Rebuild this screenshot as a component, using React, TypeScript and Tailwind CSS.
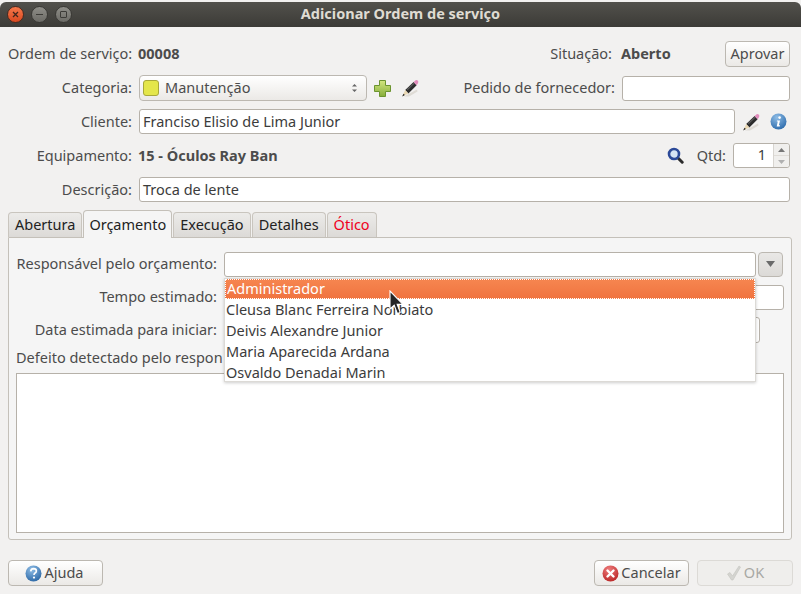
import React from "react";

function Pencil({ className = "" }: { className?: string }) {
  return (
    <svg width="18" height="18" viewBox="0 0 18 18" className={className}>
      <path d="M3 17.5 L16 10.5 L16.5 12.5 L8 17.5 Z" fill="#d4d0c6" opacity="0.65" />
      <path d="M4.2 11 L12.6 3 L15.6 6.2 L7.4 14.4 Z" fill="#2c2c2c" />
      <path d="M5.8 10.2 L13.2 3.4 L13.9 4.2 L6.6 11.2 Z" fill="#5c5c5c" />
      <path d="M12.6 3 L14.6 1.2 Q15.8 0.6 16.9 1.7 Q17.7 2.8 17.1 4 L15.6 6.2 Z" fill="#e28cbc" />
      <path d="M4.2 11 L7.4 14.4 L1.4 17.2 Z" fill="#e9d7b2" />
      <path d="M2.5 14.7 L3.9 16 L1.2 17.4 Z" fill="#222" />
    </svg>
  );
}

function Plus() {
  return (
    <svg width="17" height="17" viewBox="0 0 17 17">
      <defs>
        <linearGradient id="plusGrad" x1="0" y1="0" x2="0" y2="1">
          <stop offset="0" stopColor="#d3e680" />
          <stop offset="1" stopColor="#86ad3a" />
        </linearGradient>
      </defs>
      <path d="M5.5 0.5 H11.5 V5.5 H16.5 V11.5 H11.5 V16.5 H5.5 V11.5 H0.5 V5.5 H5.5 Z" fill="url(#plusGrad)" stroke="#6c9430" strokeWidth="1" />
    </svg>
  );
}

function Info() {
  return (
    <svg width="17" height="17" viewBox="0 0 17 17">
      <defs>
        <radialGradient id="infoGrad" cx="0.4" cy="0.25" r="0.9">
          <stop offset="0" stopColor="#8fbde6" />
          <stop offset="1" stopColor="#1e5fa3" />
        </radialGradient>
      </defs>
      <circle cx="8.5" cy="8.5" r="8" fill="url(#infoGrad)" />
      <circle cx="9.6" cy="4.6" r="1.3" fill="#fff" />
      <path d="M7 7.4 H10 L8.9 12.2 H10 L9.7 13.4 H6.7 L7.8 8.4 H6.8 Z" fill="#fff" />
    </svg>
  );
}

function Magnifier() {
  return (
    <svg width="17" height="17" viewBox="0 0 17 17">
      <path d="M10.5 10.5 L15.2 15.2" stroke="#2b2b2b" strokeWidth="3" strokeLinecap="round" />
      <circle cx="7" cy="7" r="5" fill="#d6e4f4" stroke="#2c4a98" strokeWidth="2.6" />
    </svg>
  );
}

function Help() {
  return (
    <svg width="17" height="17" viewBox="0 0 17 17">
      <defs>
        <radialGradient id="helpGrad" cx="0.4" cy="0.25" r="0.9">
          <stop offset="0" stopColor="#8fbde6" />
          <stop offset="1" stopColor="#1d5b9c" />
        </radialGradient>
      </defs>
      <circle cx="8.5" cy="8.5" r="8" fill="url(#helpGrad)" />
      <path d="M5.7 6.3 Q6 3.6 8.6 3.6 Q11.4 3.7 11.4 6 Q11.4 7.4 9.8 8.3 Q9 8.8 9 10.1" fill="none" stroke="#fff" strokeWidth="1.6" />
      <circle cx="9" cy="12.6" r="1.1" fill="#fff" />
    </svg>
  );
}

function CancelIcon() {
  return (
    <svg width="17" height="17" viewBox="0 0 17 17">
      <defs>
        <radialGradient id="cancelGrad" cx="0.4" cy="0.25" r="0.9">
          <stop offset="0" stopColor="#ee7b7b" />
          <stop offset="1" stopColor="#b31b1b" />
        </radialGradient>
      </defs>
      <circle cx="8.5" cy="8.5" r="8" fill="url(#cancelGrad)" />
      <path d="M5.5 5.5 L11.5 11.5 M11.5 5.5 L5.5 11.5" stroke="#fff" strokeWidth="2.4" strokeLinecap="round" />
    </svg>
  );
}

function CheckIcon() {
  return (
    <svg width="16" height="16" viewBox="0 0 16 16">
      <path d="M1.5 9 L4 7.5 L6.5 11 L13 1 L14.5 2 L7 15 L5.5 15 Z" fill="#d4d4d0" stroke="#c4c4c0" strokeWidth="0.6" />
    </svg>
  );
}

function Cursor() {
  return (
    <svg width="16" height="26" viewBox="0 0 16 26">
      <path d="M1 1 L1 19 L5.2 15.2 L8.4 23.6 L11.2 22.4 L8.2 14.4 L14 14.4 Z" fill="#262626" stroke="#fff" strokeWidth="1.1" />
    </svg>
  );
}

const input = "h-[25px] rounded-[3px] border border-[#b6b1a9] bg-white px-[3px] pb-[2px] flex items-center text-[#3c3c3c]";
const btn = "rounded-[4px] border border-[#bcb8b1] bg-gradient-to-b from-white to-[#ebe9e6] flex items-center justify-center text-[#4c4c4c]";
const value = "font-bold text-[#4c4c4c] -mt-[2px]";

function Label({ w = "w-[124px]", children }: { w?: string; children: React.ReactNode }) {
  return <div className={`${w} shrink-0 -mt-[2px] text-right text-[#4c4c4c] whitespace-nowrap`}>{children}</div>;
}

function Tab({ children, active, red }: { children: React.ReactNode; active?: boolean; red?: boolean }) {
  return active ? (
    <div className="relative z-10 h-[28px] -mb-px rounded-t-[4px] border border-b-0 border-[#c4c0b9] bg-[#f5f5f5] px-[5px] flex items-center text-[#222] whitespace-nowrap">
      <span className="-mt-[2px]">{children}</span>
    </div>
  ) : (
    <div className={`h-[25px] self-end rounded-t-[4px] border border-b-0 border-[#c9c5be] bg-gradient-to-b from-[#ecebe9] to-[#dcdad7] px-[6px] pb-[2px] flex items-center whitespace-nowrap ${red ? "text-[#f0001c]" : "text-[#222]"}`}>
      {children}
    </div>
  );
}

export default function App() {
  return (
    <div
      className="relative w-[801px] h-[594px] overflow-hidden bg-[#f2f1f0] text-[14.5px] leading-[20px] flex flex-col"
      style={{ fontFamily: '"Noto Sans", sans-serif' }}
    >
      {/* title bar */}
      <div className="relative h-[25px] mt-[2px] shrink-0 rounded-t-[6px] bg-gradient-to-b from-[#52514c] to-[#3c3b37] flex items-center pl-[7px] pr-[6px]">
        <div className="flex gap-[7px] items-center">
          <div className="w-[17px] h-[17px] rounded-full bg-gradient-to-b from-[#f5784a] to-[#d9481f] border border-[#4a2a1f] flex items-center justify-center">
            <svg width="7" height="7" viewBox="0 0 7 7"><path d="M1 1 L6 6 M6 1 L1 6" stroke="#41261c" strokeWidth="1.3" /></svg>
          </div>
          <div className="w-[17px] h-[17px] rounded-full bg-gradient-to-b from-[#8f8e88] to-[#6c6b66] border border-[#3a3935] flex items-center justify-center">
            <div className="w-[7px] h-[1.5px] bg-[#3c3b37]" />
          </div>
          <div className="w-[17px] h-[17px] rounded-full bg-gradient-to-b from-[#8f8e88] to-[#6c6b66] border border-[#3a3935] flex items-center justify-center">
            <div className="w-[7px] h-[7px] rounded-[1px] border border-[#3c3b37]" />
          </div>
        </div>
        <div className="flex-1 text-center font-bold text-[#dfdbd2] pr-[66px] -mt-[4px]">Adicionar Ordem de serviço</div>
      </div>

      {/* form */}
      <div className="pl-[8px] flex flex-col">
        <div className="w-[782px] h-[26px] mt-[14px] flex items-center">
          <Label>Ordem de serviço:</Label>
          <div className={`ml-[6px] ${value}`}>00008</div>
          <div className="ml-auto text-[#4c4c4c] -mt-[2px]">Situação:</div>
          <div className={`ml-[9px] w-[104px] ${value}`}>Aberto</div>
          <div className={`${btn} w-[65px] h-[26px] pb-[2px]`}>Aprovar</div>
        </div>

        <div className="w-[782px] h-[26px] mt-[8px] flex items-center">
          <Label>Categoria:</Label>
          <div className={`${btn} ml-[7px] w-[228px] h-[26px] justify-start! px-[3px] gap-[6px]`}>
            <div className="w-[16px] h-[16px] rounded-[3px] border border-[#a8a83a] bg-[#e4e64a]" />
            <span className="-mt-[2px]">Manutenção</span>
            <svg className="ml-auto mr-[5px]" width="7" height="14" viewBox="0 0 7 14">
              <path d="M3.5 3 L6 5.5 H1 Z M3.5 11 L6 8.5 H1 Z" fill="#666" />
            </svg>
          </div>
          <div className="ml-[7px] w-[17px]"><Plus /></div>
          <div className="ml-[10px] w-[18px]"><Pencil /></div>
          <div className="ml-auto"><Label w="w-[160px]">Pedido de fornecedor:</Label></div>
          <div className={`${input} ml-[7px] w-[168px]`} />
        </div>

        <div className="h-[25px] mt-[8px] flex items-center">
          <Label>Cliente:</Label>
          <div className={`${input} ml-[7px] w-[596px]`}>Franciso Elisio de Lima Junior</div>
          <div className="ml-[7px]"><Pencil /></div>
          <div className="ml-[10px]"><Info /></div>
        </div>

        <div className="w-[782px] h-[25px] mt-[9px] flex items-center">
          <Label>Equipamento:</Label>
          <div className={`ml-[6px] ${value}`}>15 - Óculos Ray Ban</div>
          <div className="ml-auto"><Magnifier /></div>
          <div className="ml-[13px] text-[#4c4c4c] -mt-[2px]">Qtd:</div>
          <div className="ml-[7px] w-[57px] h-[25px] rounded-[3px] border border-[#b6b1a9] bg-white flex text-[#3c3c3c]">
            <div className="flex-1 text-right pr-[7px] leading-[21px]">1</div>
            <div className="w-[16px] border-l border-[#d8d5d0] bg-[#f0efed] flex flex-col rounded-r-[3px]">
              <div className="flex-1 flex items-center justify-center border-b border-[#e0ddd8]">
                <svg width="7" height="4" viewBox="0 0 7 4"><path d="M3.5 0 L7 4 H0 Z" fill="#777" /></svg>
              </div>
              <div className="flex-1 flex items-center justify-center">
                <svg width="7" height="4" viewBox="0 0 7 4"><path d="M0 0 H7 L3.5 4 Z" fill="#b0b0b0" /></svg>
              </div>
            </div>
          </div>
        </div>

        <div className="h-[25px] mt-[9px] flex items-center">
          <Label>Descrição:</Label>
          <div className={`${input} ml-[7px] w-[651px]`}>Troca de lente</div>
        </div>

        {/* tabs */}
        <div className="mt-[8px] flex items-end h-[27px] gap-[1px]">
          <Tab>Abertura</Tab>
          <Tab active>Orçamento</Tab>
          <Tab>Execução</Tab>
          <Tab>Detalhes</Tab>
          <Tab red>Ótico</Tab>
        </div>

        <div className="h-[303px] w-[784px] rounded-b-[3px] rounded-tr-[3px] border border-[#c4c0b9] bg-[#f5f5f5] px-[7px] flex flex-col">
          <div className="mt-[13px] h-[26px] flex items-center">
            <Label w="w-[201px]">Responsável pelo orçamento:</Label>
            <div className={`${input} ml-[7px] w-[532px]`} />
            <div className="ml-[2px] w-[25px] h-[25px] rounded-[4px] border border-[#bcb8b1] bg-gradient-to-b from-[#e9e8e6] to-[#dcdad7] flex items-center justify-center">
              <svg width="9" height="6" viewBox="0 0 9 6"><path d="M0 0 H9 L4.5 6 Z" fill="#6a6a6a" /></svg>
            </div>
          </div>
          <div className="mt-[7px] h-[26px] flex items-center">
            <Label w="w-[201px]">Tempo estimado:</Label>
            <div className={`${input} ml-[7px] w-[560px]`} />
          </div>
          <div className="mt-[7px] h-[26px] flex items-center">
            <Label w="w-[201px]">Data estimada para iniciar:</Label>
            <div className={`${input} ml-[7px] w-[536px] h-[26px]!`} />
          </div>
          <div className="mt-[4px] h-[20px] whitespace-nowrap text-[#4c4c4c]">Defeito detectado pelo respon</div>
          <div className="mt-[6px] h-[160px] w-[768px] border border-[#b6b1a9] bg-white" />
        </div>
      </div>

      {/* bottom buttons */}
      <div className="mt-[20px] px-[8px] flex items-center">
        <div className={`${btn} w-[95px] h-[26px] gap-[2px] pr-[2px]`}><Help /><span className="-mt-[2px]">Ajuda</span></div>
        <div className={`${btn} ml-auto w-[95px] h-[26px] gap-[2px]`}><CancelIcon /><span className="-mt-[2px]">Cancelar</span></div>
        <div className="ml-[8px] w-[96px] h-[26px] rounded-[4px] border border-[#dcdad6] bg-[#efeeec] flex items-center justify-center gap-[2px] text-[#a8a8a4]">
          <CheckIcon /><span className="-mt-[2px]">OK</span>
        </div>
      </div>

      {/* open dropdown */}
      <div className="absolute left-[224px] top-[278px] w-[532px] h-[104px] bg-white border border-[#dcdad6] shadow-[0_1px_3px_rgba(0,0,0,0.2)] text-[#3c3c3c] flex flex-col">
        <div className="h-[20px] shrink-0 border border-dotted border-white bg-gradient-to-b from-[#f6854f] to-[#f07440] text-white leading-[16px] px-[1px]">Administrador</div>
        <div className="h-[21px] leading-[21px] px-[1px]">Cleusa Blanc Ferreira Norbiato</div>
        <div className="h-[21px] leading-[21px] px-[1px]">Deivis Alexandre Junior</div>
        <div className="h-[21px] leading-[21px] px-[1px]">Maria Aparecida Ardana</div>
        <div className="h-[19px] pt-px leading-[18px] px-[1px]">Osvaldo Denadai Marin</div>
      </div>
      <div className="absolute left-[389px] top-[290px]"><Cursor /></div>
    </div>
  );
}
